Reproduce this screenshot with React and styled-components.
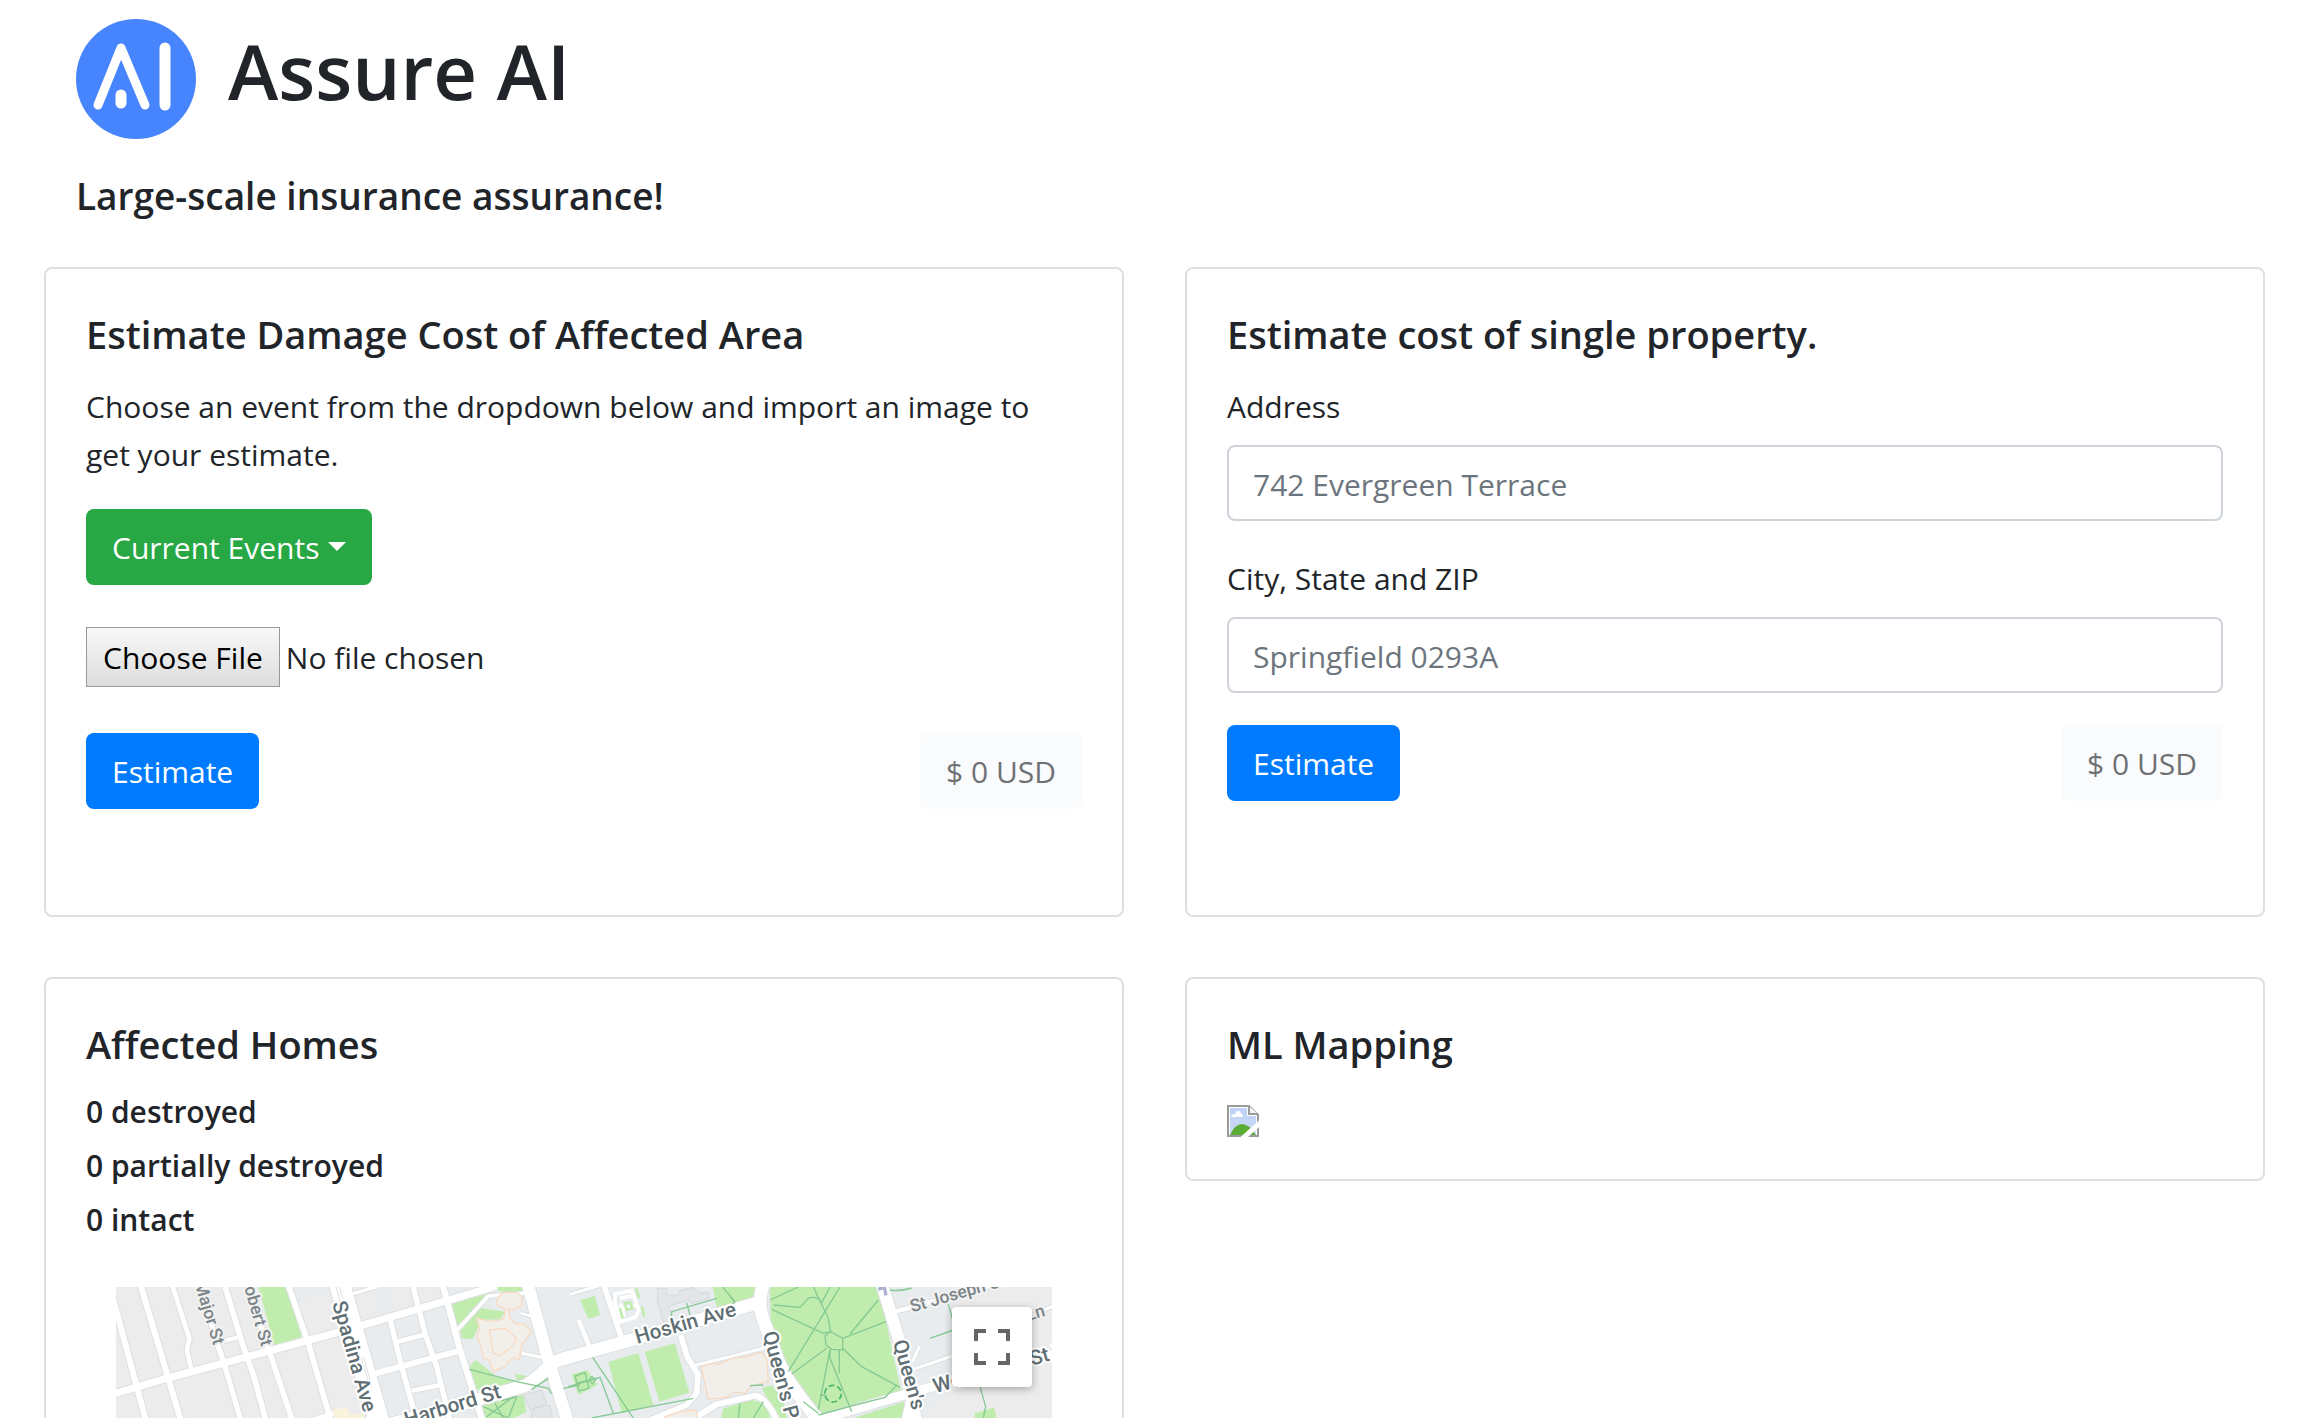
import React from "react";
import styled, { createGlobalStyle } from "styled-components";

const GlobalStyle = createGlobalStyle`
  * {
    box-sizing: border-box;
  }
  body {
    margin: 0;
    background: #fff;
    color: #212529;
    font-family: "Open Sans", "Noto Sans", sans-serif;
    font-size: 30px;
    line-height: 48px;
  }
  button, input, select {
    font: inherit;
  }
`;

const Page = styled.div`
  height: 100vh;
  overflow: hidden;
`;

const Header = styled.header`
  padding: 19px 76px 0;
`;

const Brand = styled.div`
  display: flex;
  gap: 32px;
  height: 120px;
`;

const Title = styled.h1`
  margin: 0;
  font-size: 76px;
  font-weight: 600;
  line-height: 104px;
`;

const Tagline = styled.h2`
  margin: 33px 0 0;
  font-size: 37px;
  font-weight: 600;
  line-height: 48px;
`;

const Board = styled.main`
  display: grid;
  grid-template-columns: 1fr 1fr;
  align-items: start;
  gap: 60px 61px;
  padding: 47px 55px 0 44px;
`;

const Card = styled.section`
  min-height: ${props => props.$tall ? "650px" : "204px"};
  padding: 40px;
  border: 2px solid #dfdfdf;
  border-radius: 8px;
`;

const CardTitle = styled.h3`
  margin: 0 0 24px;
  font-size: 38px;
  font-weight: 600;
  line-height: 50px;
`;

const CardText = styled.p`
  margin: 0 0 30px;
  padding-right: 24px;
`;

const EventPicker = styled.div`
  position: relative;
  display: inline-block;
  margin-bottom: 42px;

  &::after {
    content: "";
    position: absolute;
    top: 33px;
    right: 26px;
    border: 9px solid transparent;
    border-top-color: #fff;
    border-bottom: 0;
    pointer-events: none;
  }
`;

const EventSelect = styled.select`
  display: block;
  appearance: none;
  height: 76px;
  padding: 2px 52px 0 26px;
  border: 0;
  border-radius: 8px;
  background: #28a745;
  color: #fff;
`;

const FileInput = styled.input`
  display: block;
  width: 100%;
  height: 60px;
  margin-bottom: 46px;
  line-height: 60px;

  &::file-selector-button {
    height: 60px;
    margin: 0 6px 0 0;
    padding: 0 16px;
    border: 1px solid #999;
    border-radius: 0;
    background: linear-gradient(#f8f8f8, #ddd);
    color: #000;
    font: inherit;
  }
`;

const Actions = styled.div`
  display: flex;
  justify-content: space-between;
`;

const Button = styled.button`
  height: 76px;
  padding: 2px 26px 0;
  border: 0;
  border-radius: 8px;
  background: ${props => props.$light ? "#f8f9fc" : "#007bff"};
  color: ${props => props.$light ? "#212529" : "#fff"};

  &:disabled {
    opacity: 0.65;
  }
`;

const Field = styled.div`
  margin-bottom: ${props => props.$last ? "32px" : "34px"};
`;

const Label = styled.label`
  display: block;
  margin-bottom: 14px;
`;

const TextInput = styled.input`
  display: block;
  width: 100%;
  height: 76px;
  padding: 2px 24px 0;
  border: 2px solid #ced4da;
  border-radius: 8px;
  color: #495057;

  &::placeholder {
    color: #6c757d;
    opacity: 1;
  }
`;

const Count = styled.p`
  margin: 0 0 16px;
  font-weight: 600;
  line-height: 38px;
`;

const MapFrame = styled.div`
  position: relative;
  height: 400px;
  margin: 48px 30px 0;
  overflow: hidden;
  background: #ececec;
`;

const MapDrawing = styled.svg`
  display: block;
  width: 100%;
  height: 100%;
`;

const RoadLabel = styled.text`
  fill: ${props => props.$minor ? "#7b8488" : "#5f6f74"};
  stroke: ${props => props.$minor ? "#f1f1f1" : "#fff"};
  stroke-width: 12px;
  stroke-linejoin: round;
  paint-order: stroke;
  font-family: Roboto, sans-serif;
  font-size: ${props => props.$minor ? "52px" : "62px"};
  font-weight: 500;
`;

const FullscreenButton = styled.button`
  position: absolute;
  top: 20px;
  right: 20px;
  display: grid;
  place-items: center;
  width: 80px;
  height: 80px;
  padding: 0;
  border: 0;
  border-radius: 4px;
  background: #fff;
  box-shadow: 0 2px 8px rgba(0, 0, 0, 0.3);
`;

const BrokenIcon = styled.svg`
  display: block;
  margin-top: 36px;
`;

// [path, width]
const roads = [
  ["M35 70L140 460", 18],
  ["M120 40L165 190L205 325L245 460", 18],
  ["M215 40L268 205L261 240L276 310", 14],
  ["M300 40L345 200L372 280L425 460", 16],
  ["M372 40L430 230L462 320L500 460", 17],
  ["M440 40L510 250L580 460", 17],
  ["M563 40L625 220L695 460", 17],
  ["M370 213L425 200", 12],
  ["M30 375L200 325L500 245L720 185L800 162L1040 92L1190 48", 22],
  ["M590 465L700 430", 14],
  ["M755 72L832 50", 10],
  ["M937 40L975 190L1010 290L1052 460", 16],
  ["M868 140L905 290L952 460", 16],
  ["M1027 40L1080 240L1150 460", 19],
  ["M890 216L970 195", 14],
  ["M820 312L1080 242", 18],
  ["M935 362L1022 345", 14],
  ["M1072 180L1165 78L1275 70", 11],
  ["M1262 130L1300 140", 8],
  ["M1265 250L1345 266", 9],
  ["M1410 73L1500 46", 9],
  ["M1510 40L1565 205", 17],
  ["M1436 150L1468 230", 14],
  ["M1742 195L1762 262L1794 312L1790 370L1760 405L1650 450", 17],
  ["M1782 287L1990 235", 8],
  ["M1790 440L1850 403L1965 377Q2000 380 2035 460", 18],
  ["M2385 125L2900 -15", 13],
  ["M2440 298L2570 253", 9],
  ["M2438 275L2458 230", 9],
  ["M2800 135L2870 103", 10],
  ["M2170 445L2470 358L2890 245", 28],
  ["M2435 370L2415 460", 24],
  ["M718 40L838 460", 62],
  ["M1283 40L1345 270L1405 460", 36],
  ["M880 460L1080 405L1265 350Q1290 345 1345 290Q1360 272 1410 261L1610 205L1985 95", 38],
  ["M1992 40Q1970 90 1990 150L2025 245Q2050 330 2165 460", 38],
  ["M2345 40L2400 220L2450 460", 36],
];

const parks = [
  "475,51 562,51 605,200 522,230 505,160",
  "1055,102 1130,78 1165,72 1074,175",
  "1080,175 1128,112 1215,125 1200,148 1145,150 1118,208 1085,205",
  "1170,51 1265,51 1270,72 1200,64",
  "1108,290 1128,270 1190,320 1250,335 1190,365 1132,360",
  "1245,312 1282,318 1270,335 1250,330",
  "1150,400 1270,375 1280,425 1210,460 1150,460",
  "1838,51 1972,51 1962,86 1850,110",
  "2010,51 2335,51 2405,368 2170,438 2062,290 2012,150",
  "1440,90 1485,78 1500,135 1465,147",
  "1525,275 1615,250 1660,405 1565,430",
  "1634,245 1725,220 1768,368 1678,395",
  "1415,312 1462,300 1492,345 1435,375",
  "1870,415 1955,390 1998,400 2015,460 1860,460",
  "1985,355 2015,345 2045,380 2065,460 2045,460",
  "2210,460 2412,395 2412,460",
  "2624,430 2682,412 2694,460 2624,460",
];

// footpaths inside the parks and campus
const trails = [
  "M1108 298L1250 335L1345 355L1355 372M1390 355L1440 345M1295 358L1345 325",
  "M1160 440L1240 380M1150 410L1225 444M1185 400L1210 444M1205 392L1250 380L1225 444",
  "M1478 262L1600 444M1405 350L1500 322L1540 430M1475 444L1780 385",
  "M1425 318L1455 308L1467 355L1437 363ZM1430 340L1460 332M1475 320L1487 328L1478 342L1467 332Z",
  "M1715 160L1715 125L1850 85M1760 98L1770 135M1868 51L1905 95L1890 110M1890 80L1905 95",
  "M2010 90L2095 51M2020 105L2100 112L2125 85Q2150 75 2165 98L2190 51M2015 118L2170 190L2192 185L2228 205L2358 155",
  "M2140 51L2185 145L2192 185L2175 198L2178 225L2195 238L2228 240L2228 205M2220 51L2065 305M2335 90L2250 192",
  "M2180 235L2075 312M2190 238L2155 420M2190 238L2190 265L2255 425M2218 240L2218 310M2228 235L2285 290L2400 352M2390 345L2355 382L2265 405L2155 435",
  "M2110 395L2155 430M2160 375L2180 377M2370 60Q2400 65 2435 54M2490 205L2560 180M2535 70L2560 155M2640 350L2657 410L2650 444",
  "M1920 400L1915 444M1990 395L1960 444M1950 347L1990 345",
];

const Logo = () => (
  <svg width="120" height="120" viewBox="0 0 120 120" role="img" aria-label="AI">
    <circle cx="60" cy="60" r="60" fill="#4785ff" />
    <g fill="none" stroke="#fff" strokeLinecap="round" strokeLinejoin="round">
      <path d="M22 86L45 29L69 86" strokeWidth="9" />
      <path d="M45 76V84" strokeWidth="11" />
      <path d="M89 29V86" strokeWidth="11" />
    </g>
  </svg>
);

const BrokenImage = () => (
  <BrokenIcon width="32" height="32" viewBox="0 0 32 32" role="img" aria-label="ML mapping">
    <defs>
      <linearGradient id="sky" x2="0" y2="1">
        <stop offset="0" stopColor="#bfd2f5" />
        <stop offset="1" stopColor="#cbdaf7" />
      </linearGradient>
    </defs>
    <path d="M1 1H22L31 10V31H1Z" fill="#fff" stroke="#9a9a9a" strokeWidth="2" />
    <path d="M3 3H20V11H29V29H3Z" fill="url(#sky)" />
    <path d="M4 12Q5 9 8 9Q11 3 14 8Q16 9 16 12Z" fill="#fff" />
    <path d="M3 30Q8 19 15 19Q22 19 29 30Z" fill="#5aac35" />
    <path d="M22 1V9H31" fill="#f4f4f4" stroke="#9a9a9a" strokeWidth="2" />
    <path d="M15 34L34 17" stroke="#fff" strokeWidth="5" />
  </BrokenIcon>
);

const CityMap = () => (
  <MapDrawing viewBox="48 51 2808 1200" preserveAspectRatio="xMinYMin slice" role="img" aria-label="Map">
    <rect x="0" y="0" width="2900" height="1300" fill="#ececec" />
    <path d="M575 51H675L680 72L595 98ZM830 51H875L880 110L840 125ZM785 170L1040 100L1050 51H2560L2610 300L2450 460H865Z" fill="#e8ecef" />
    {parks.map(points => <polygon key={points} points={points} fill="#c0ecae" />)}
    <path d="M695 420L740 413L750 435L790 430V460H690Z" fill="#faf3dc" />
    {/* grey blocks of the college */}
    <g fill="#e3e6e8" stroke="#d5d9dc" strokeWidth="3">
      <path d="M1672 55H1700V75H1735L1738 62L1780 52L1800 70L1825 66L1828 85L1775 100L1765 90L1705 110L1720 150L1690 158L1680 120L1672 90Z" />
      <path d="M1270 375L1325 360L1340 400L1290 420ZM1300 415L1350 405L1360 460H1290Z" />
    </g>
    <g fill="none" strokeLinejoin="round">
      {roads.map(([d, width]) => <path key={d} d={d} stroke="#dddfe0" strokeWidth={width + 6} />)}
      {roads.map(([d, width]) => <path key={d} d={d} stroke="#fff" strokeWidth={width} />)}
    </g>
    <path d="M708 51L722 100M718 51L732 100M782 260L810 350M790 260L816 350" stroke="#dcdee0" strokeWidth="3" />
    <path d="M1545 72L1595 62L1617 120L1608 140L1562 156L1545 100ZM1560 85L1605 75M1556 122L1612 105M1572 140L1562 100" fill="none" stroke="#fff" strokeWidth="11" />
    <path d="M1574 100L1590 96L1597 114L1580 119ZM1608 55L1618 85M1625 110L1633 140M1560 115L1568 145" fill="none" stroke="#c0ecae" strokeWidth="8" />
    <g fill="#f2efeb" stroke="#f8dac2" strokeWidth="4" strokeLinejoin="round">
      <path d="M1195 80L1210 67H1250L1267 82L1265 105L1240 120L1225 115L1230 145L1245 160L1275 163L1295 185L1265 225L1258 270L1238 262L1215 290L1180 305L1168 270L1150 265L1145 240L1130 195L1140 180L1130 145L1180 155L1212 145L1215 118L1190 102Z" />
      <path d="M1168 180L1215 175L1250 205L1240 225L1200 257L1180 250Z" />
      <path d="M1803 290L1845 278L1850 285L1905 262L1930 263L1985 247L2000 265L2005 335L1955 347L1935 370L1905 366L1880 382L1825 387L1815 340Z" />
      <path d="M1695 440L1740 425L1785 420L1795 444V460H1695Z" />
    </g>
    <g fill="none" stroke="#85c994" strokeWidth="4">
      {trails.map(d => <path key={d} d={d} />)}
      <circle cx="2199" cy="371" r="25" stroke="#48b56a" strokeWidth="5" strokeDasharray="18 8" />
    </g>
    <path d="M2335 58L2353 51L2358 76" fill="none" stroke="#aab0cd" strokeWidth="10" />
    <RoadLabel $minor transform="translate(283 40) rotate(73)">Major St</RoadLabel>
    <RoadLabel $minor transform="translate(424 22) rotate(74)">Robert St</RoadLabel>
    <RoadLabel transform="translate(696 100) rotate(74)">Spadina Ave</RoadLabel>
    <RoadLabel transform="translate(920 470) rotate(-17)">Harbord St</RoadLabel>
    <RoadLabel transform="translate(1612 222) rotate(-16)">Hoskin Ave</RoadLabel>
    <RoadLabel transform="translate(1988 190) rotate(75)">Queen's Park</RoadLabel>
    <RoadLabel transform="translate(2378 216) rotate(74)">Queen's</RoadLabel>
    <RoadLabel $minor transform="translate(2436 127) rotate(-16)">St Joseph St</RoadLabel>
    <RoadLabel $minor transform="translate(2838 137) rotate(-16)" textAnchor="end">Irwin Ln</RoadLabel>
    <RoadLabel transform="translate(2506 370) rotate(-16)">Wellesley</RoadLabel>
    <RoadLabel transform="translate(2796 287) rotate(-16)">St W</RoadLabel>
  </MapDrawing>
);

const FullscreenIcon = () => (
  <svg width="36" height="36" viewBox="0 0 36 36" fill="none" stroke="#666" strokeWidth="4">
    <path d="M2 12V2H12M24 2H34V12M34 24V34H24M12 34H2V24" />
  </svg>
);

const counts = ["0 destroyed", "0 partially destroyed", "0 intact"];

export default () => {
  return (
    <Page>
      <GlobalStyle />
      <Header>
        <Brand>
          <Logo />
          <Title>Assure AI</Title>
        </Brand>
        <Tagline>Large-scale insurance assurance!</Tagline>
      </Header>
      <Board>
        <Card $tall>
          <CardTitle>Estimate Damage Cost of Affected Area</CardTitle>
          <CardText>Choose an event from the dropdown below and import an image to get your estimate.</CardText>
          <EventPicker>
            <EventSelect aria-label="Current Events">
              <option>Current Events</option>
            </EventSelect>
          </EventPicker>
          <FileInput type="file" aria-label="Image of the affected area" />
          <Actions>
            <Button type="button">Estimate</Button>
            <Button type="button" $light disabled>$ 0 USD</Button>
          </Actions>
        </Card>

        <Card $tall>
          <CardTitle>Estimate cost of single property.</CardTitle>
          <Field>
            <Label htmlFor="address">Address</Label>
            <TextInput id="address" type="text" placeholder="742 Evergreen Terrace" />
          </Field>
          <Field $last>
            <Label htmlFor="city">City, State and ZIP</Label>
            <TextInput id="city" type="text" placeholder="Springfield 0293A" />
          </Field>
          <Actions>
            <Button type="button">Estimate</Button>
            <Button type="button" $light disabled>$ 0 USD</Button>
          </Actions>
        </Card>

        <Card>
          <CardTitle>Affected Homes</CardTitle>
          {counts.map(count => <Count key={count}>{count}</Count>)}
          <MapFrame>
            <CityMap />
            <FullscreenButton type="button" aria-label="Toggle fullscreen view">
              <FullscreenIcon />
            </FullscreenButton>
          </MapFrame>
        </Card>

        <Card>
          <CardTitle>ML Mapping</CardTitle>
          <BrokenImage />
        </Card>
      </Board>
    </Page>
  );
};
